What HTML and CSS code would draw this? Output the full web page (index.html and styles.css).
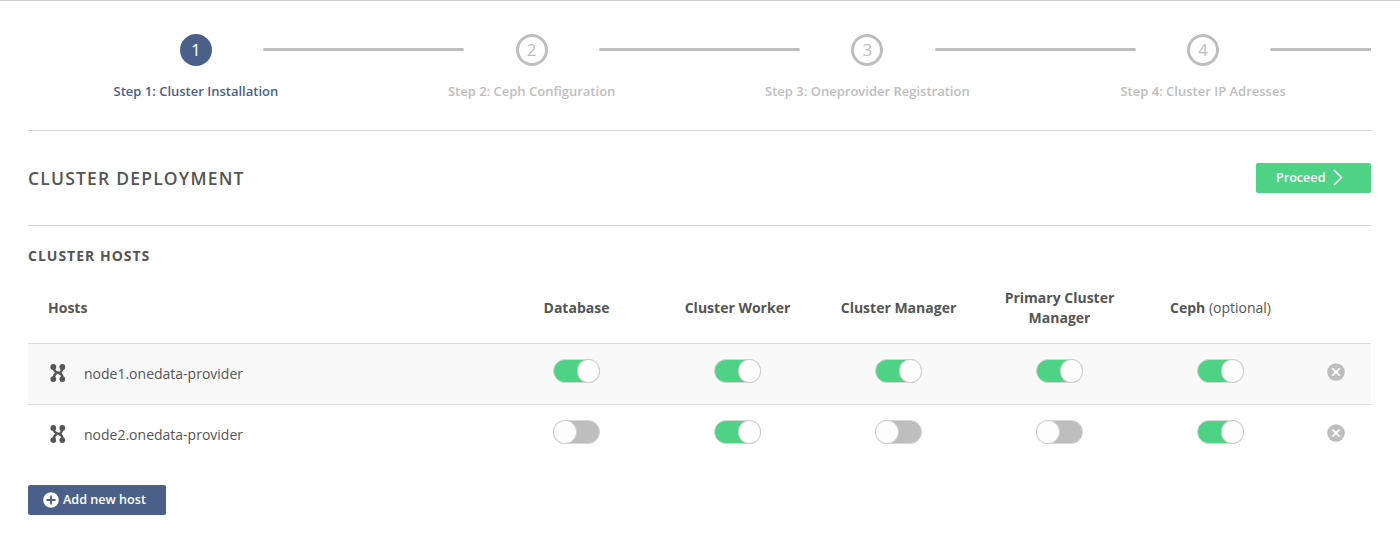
FILE: index.html
```html
<!DOCTYPE html>
<html lang="en">
<head>
<meta charset="utf-8">
<title>Cluster deployment</title>
<link rel="stylesheet" href="styles.css">
</head>
<body>
<svg class="sprite" aria-hidden="true">
  <symbol id="node" viewBox="0 0 16 18">
    <path d="M3.400 3C3.600 6.500 4.800 7.700 7.200 8.400L9 9C12 10 12.400 11.500 12.600 15M12.600 3C12.400 5.800 11.700 7.200 9.800 9M3.400 15C3.600 12.200 4.200 10.800 6.200 9" fill="none" stroke="currentColor" stroke-width="2.400"/>
    <g fill="currentColor"><circle cx="3.300" cy="2.900" r="2.900"/><circle cx="12.300" cy="2.900" r="2.900"/><circle cx="3.300" cy="15.100" r="2.900"/><circle cx="12.300" cy="15.100" r="2.900"/></g>
  </symbol>
  <symbol id="remove" viewBox="0 0 18 18">
    <circle cx="9" cy="9" r="8.800" fill="#bebebe"/>
    <path d="M5.300 5.300l7.400 7.400M12.700 5.300l-7.400 7.400" stroke="#fff" stroke-width="1.900"/>
  </symbol>
</svg>
<main class="page">
  <ol class="steps">
    <li class="step active"><span class="number">1</span><span class="label">Step 1: Cluster Installation</span></li>
    <li class="step"><span class="number">2</span><span class="label">Step 2: Ceph Configuration</span></li>
    <li class="step"><span class="number">3</span><span class="label">Step 3: Oneprovider Registration</span></li>
    <li class="step"><span class="number">4</span><span class="label">Step 4: Cluster IP Adresses</span></li>
  </ol>
  <header class="heading">
    <h1>CLUSTER DEPLOYMENT</h1>
    <button class="btn proceed"><span>Proceed</span><svg width="10" height="18" viewBox="0 0 10 18"><path d="M1 1L8.500 8.500L1 16" fill="none" stroke="currentColor" stroke-width="1.500"/></svg></button>
  </header>
  <h2>CLUSTER HOSTS</h2>
  <section class="hosts">
    <div class="row head">
      <span class="host">Hosts</span><span>Database</span><span>Cluster Worker</span><span>Cluster Manager</span><span>Primary Cluster Manager</span><span>Ceph <small>(optional)</small></span>
    </div>
    <div class="row shaded">
      <span class="host"><svg class="node"><use href="#node"/></svg>node1.onedata-provider</span>
      <i class="toggle on"></i><i class="toggle on"></i><i class="toggle on"></i><i class="toggle on"></i><i class="toggle on"></i>
      <svg class="remove"><use href="#remove"/></svg>
    </div>
    <div class="row">
      <span class="host"><svg class="node"><use href="#node"/></svg>node2.onedata-provider</span>
      <i class="toggle"></i><i class="toggle on"></i><i class="toggle"></i><i class="toggle"></i><i class="toggle on"></i>
      <svg class="remove"><use href="#remove"/></svg>
    </div>
  </section>
  <button class="btn add"><svg width="16" height="16" viewBox="0 0 16 16"><circle cx="8" cy="8" r="7.800" fill="#fff"/><path d="M8 3.500v9M3.500 8h9" stroke="#4b6089" stroke-width="1.800"/></svg><span>Add new host</span></button>
</main>
</body>
</html>
```
FILE: styles.css
```css
* { box-sizing: border-box; }
body {
  margin: 0;
  background: #fff;
  color: #555;
  font: 14px/20px "Open Sans", sans-serif;
}
.sprite { display: none; }
.page {
  height: 549px;
  padding: 0 29px 0 28px;
  border-top: 1px solid #d0d0d0;
  overflow: hidden;
}
.steps {
  display: grid;
  grid-template-columns: repeat(4, 1fr);
  height: 130px;
  margin: 0;
  padding: 33px 0 0;
  border-bottom: 1px solid #d5d5d5;
  list-style: none;
  overflow: hidden;
}
.step {
  position: relative;
  display: flex;
  flex-direction: column;
  align-items: center;
  gap: 15px;
  color: #bebebe;
}
.step::after {
  content: "";
  position: absolute;
  top: 14px;
  left: 70%;
  width: 60%;
  height: 3px;
  border-radius: 2px;
  background: #bebebe;
}
.number {
  width: 32px;
  height: 32px;
  border: 3px solid #bebebe;
  border-radius: 50%;
  font-size: 17px;
  line-height: 26px;
  text-align: center;
}
.label { font-size: 13px; font-weight: 600; }
.active { color: #4b6089; }
.active .number { border-color: #4b6089; background: #4b6089; color: #fff; }
.heading {
  display: flex;
  justify-content: space-between;
  align-items: center;
  height: 95px;
  border-bottom: 1px solid #d5d5d5;
}
h1, h2 { margin: 0; }
h1 { font-size: 17.5px; font-weight: 600; letter-spacing: 1.2px; }
h2 {
  padding: 20px 0 12px;
  font-size: 14px;
  font-weight: 700;
  letter-spacing: 1px;
}
.btn {
  display: flex;
  align-items: center;
  height: 30px;
  padding: 0 0 1px;
  border: 0;
  border-radius: 2px;
  color: #fff;
  font: 600 12.6px/20px "Open Sans", sans-serif;
}
.proceed { width: 115px; padding-left: 20px; gap: 8px; background: #4ed285; }
.add { width: 138px; margin-top: 20px; padding-left: 15px; gap: 4px; background: #4b6089; }
.row {
  display: grid;
  grid-template-columns: 468px repeat(5, 161px) 70px;
  align-items: center;
  justify-items: center;
  height: 61px;
  border-top: 1px solid #dcdcdc;
  padding-bottom: 6px;
}
.head {
  height: 65px;
  border: 0;
  padding: 0 0 6px;
  font-weight: 700;
  text-align: center;
}
.head span { padding: 0 20px; }
.head small { font-size: 14px; font-weight: 400; }
.shaded { background: #f9f9f9; }
.host {
  display: flex;
  align-items: center;
  gap: 18px;
  justify-self: start;
  padding: 5px 20px 0 22px;
}
.head .host { padding: 0 20px; }
.node { width: 16px; height: 18px; margin-top: -2px; }
.toggle {
  display: flex;
  width: 47px;
  height: 24px;
  border: 1px solid #d5d5d5;
  border-radius: 12px;
  background: #bebebe;
}
.toggle::before {
  content: "";
  width: 22px;
  height: 22px;
  border-radius: 11px;
  background: #fdfdfd;
  box-shadow: 0 0 0 1px #d0d0d0;
}
.on { justify-content: flex-end; background: #4ed285; }
.on::before { width: 21.5px; }
.remove { width: 18px; height: 18px; margin-top: 1px; }
```
